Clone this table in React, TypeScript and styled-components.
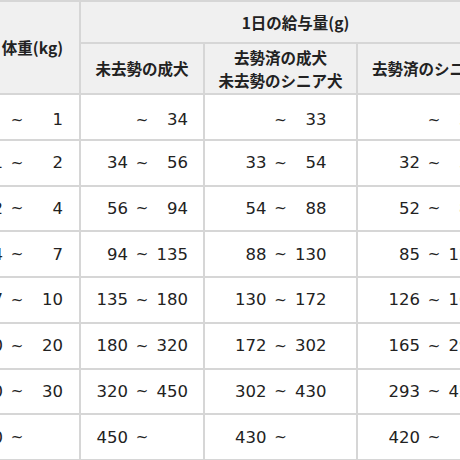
import React from 'react'
import styled, { createGlobalStyle } from 'styled-components'

const GlobalStyle = createGlobalStyle`
  html, body {
    margin: 0;
    padding: 0;
    background: #ffffff;
  }
`

const Frame = styled.div`
  width: 460px;
  height: 460px;
  overflow: hidden;
  background: #ffffff;
`

const Table = styled.table`
  border-collapse: collapse;
  table-layout: fixed;
  width: 556px;
  margin-left: -46px;
  color: #222222;
`

const HeadCell = styled.th<{ $align?: 'left' | 'center' | 'right' }>`
  background: #f0f0f0;
  border: 2px solid #d6d6d6;
  font-family: 'Noto Sans CJK JP', sans-serif;
  font-weight: 700;
  font-size: 15.5px;
  line-height: 23px;
  text-align: ${(p) => p.$align || 'center'};
  padding: ${(p) => (p.$align === 'right' ? '0 16px 0 0' : '0')};
  vertical-align: middle;
  white-space: nowrap;
`

const TopRow = styled.tr`
  height: 42px;
`

const SubRow = styled.tr`
  height: 51px;
`

const DataRow = styled.tr`
  height: 45.75px;
`

const Cell = styled.td<{ $align?: 'center' | 'right' }>`
  border: 2px solid #d6d6d6;
  padding: ${(p) => (p.$align === 'right' ? '0 16px 0 0' : '0')};
  text-align: ${(p) => p.$align || 'center'};
  vertical-align: middle;
  font-family: 'DejaVu Sans', 'Noto Sans CJK JP', sans-serif;
  font-size: 16.5px;
  white-space: nowrap;
`

const Range = styled.span`
  display: inline-grid;
  grid-template-columns: 32px 28px 32px;
  align-items: center;
`

const Num = styled.span`
  text-align: right;
`

const Tilde = styled.span`
  text-align: center;
  font-size: 15px;
`

type Row = {
  weight: [string, string]
  intact: [string, string]
  neutered: [string, string]
  senior: [string, string]
}

const rows: Row[] = [
  { weight: ['', '1'], intact: ['', '34'], neutered: ['', '33'], senior: ['', '32'] },
  { weight: ['1', '2'], intact: ['34', '56'], neutered: ['33', '54'], senior: ['32', '52'] },
  { weight: ['2', '4'], intact: ['56', '94'], neutered: ['54', '88'], senior: ['52', '85'] },
  { weight: ['4', '7'], intact: ['94', '135'], neutered: ['88', '130'], senior: ['85', '126'] },
  { weight: ['7', '10'], intact: ['135', '180'], neutered: ['130', '172'], senior: ['126', '165'] },
  { weight: ['10', '20'], intact: ['180', '320'], neutered: ['172', '302'], senior: ['165', '293'] },
  { weight: ['20', '30'], intact: ['320', '450'], neutered: ['302', '430'], senior: ['293', '420'] },
  { weight: ['30', ''], intact: ['450', ''], neutered: ['430', ''], senior: ['420', ''] },
]

function RangeText({ value }: { value: [string, string] }) {
  return (
    <Range>
      <Num>{value[0]}</Num>
      <Tilde>~</Tilde>
      <Num>{value[1]}</Num>
    </Range>
  )
}

export default function App() {
  return (
    <Frame>
      <GlobalStyle />
      <Table>
        <colgroup>
          <col style={{ width: 125 }} />
          <col style={{ width: 124 }} />
          <col style={{ width: 153 }} />
          <col style={{ width: 154 }} />
        </colgroup>
        <thead>
          <TopRow>
            <HeadCell rowSpan={2} $align="right">体重(kg)</HeadCell>
            <HeadCell colSpan={3}>1日の給与量(g)</HeadCell>
          </TopRow>
          <SubRow>
            <HeadCell>未去勢の成犬</HeadCell>
            <HeadCell>
              去勢済の成犬
              <br />
              未去勢のシニア犬
            </HeadCell>
            <HeadCell>去勢済のシニア犬</HeadCell>
          </SubRow>
        </thead>
        <tbody>
          {rows.map((r, i) => (
            <DataRow key={i}>
              <Cell $align="right">
                <RangeText value={r.weight} />
              </Cell>
              <Cell>
                <RangeText value={r.intact} />
              </Cell>
              <Cell>
                <RangeText value={r.neutered} />
              </Cell>
              <Cell>
                <RangeText value={r.senior} />
              </Cell>
            </DataRow>
          ))}
        </tbody>
      </Table>
    </Frame>
  )
}
